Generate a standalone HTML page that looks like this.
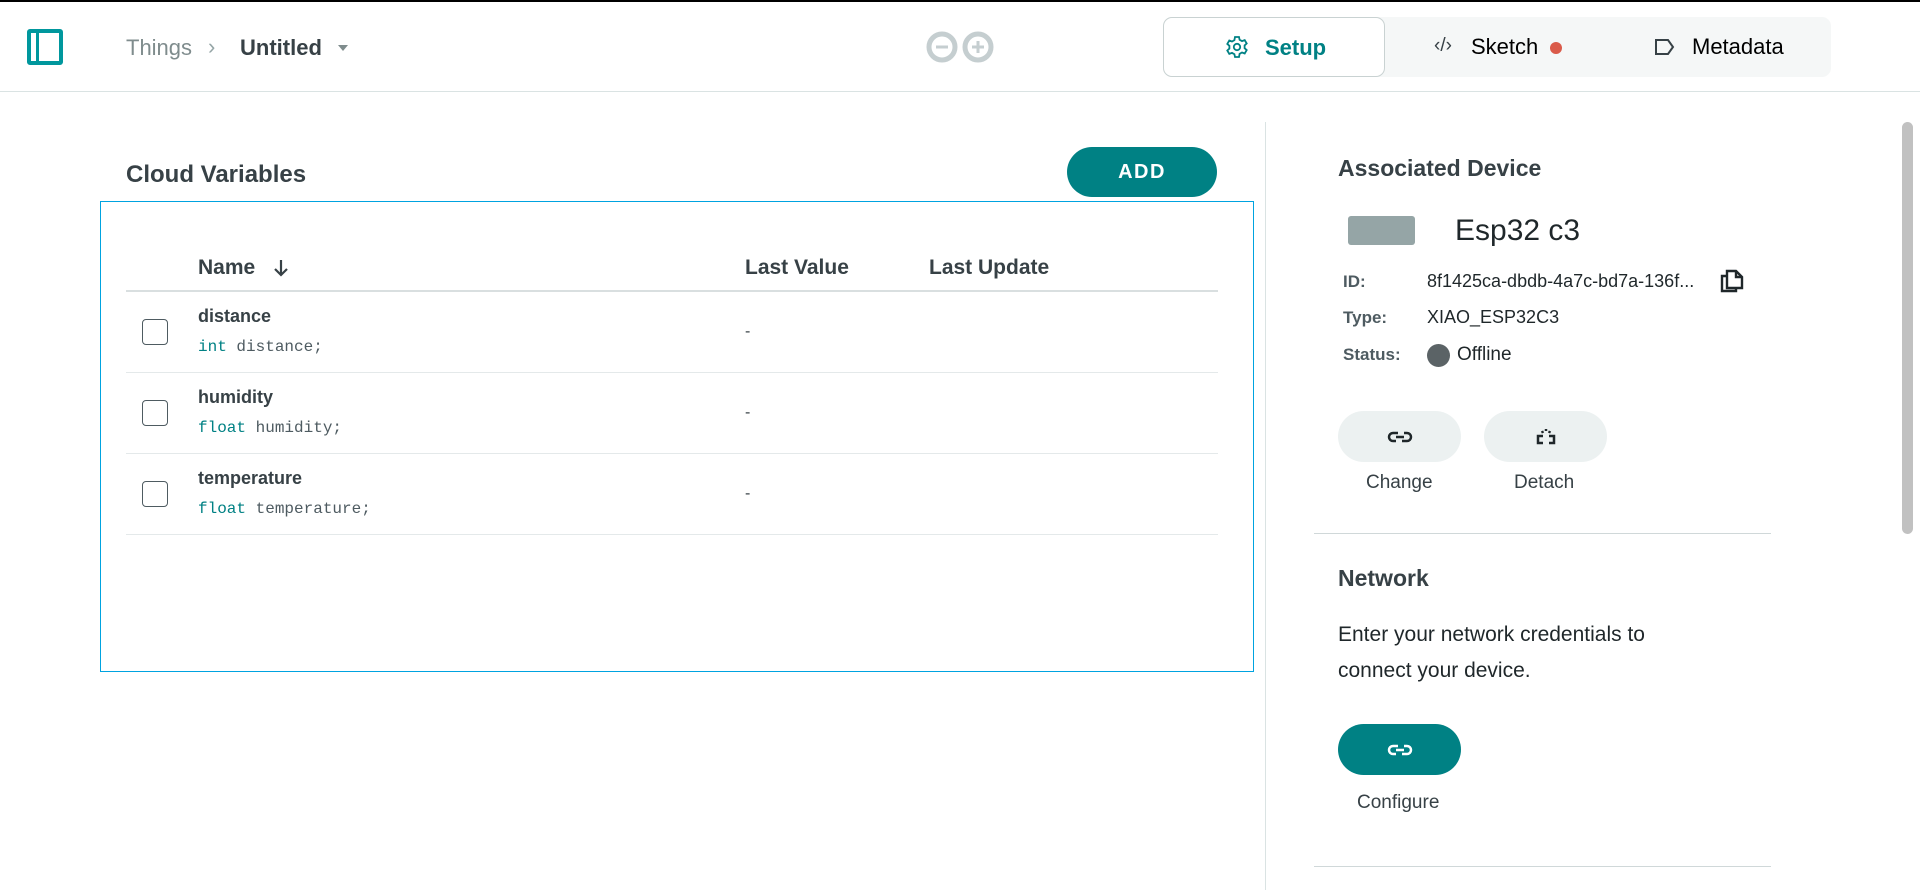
<!DOCTYPE html>
<html><head><meta charset="utf-8"><style>
*{box-sizing:border-box;margin:0;padding:0}
body{width:1920px;height:890px;overflow:hidden;background:#fff;font-family:"Liberation Sans",sans-serif;color:#374146;position:relative}
.a{position:absolute;white-space:nowrap}
.b{font-weight:bold}
.mono{font-family:"Liberation Mono",monospace;font-size:16px;color:#4e5b61}
.mono span{color:#008184}
.pill{position:absolute;border-radius:26px;background:#ecf1f1;display:flex;align-items:center;justify-content:center}
</style></head><body>
<div class="a" style="left:0;top:0;width:1920px;height:2px;background:#000"></div>
<div class="a" style="left:0;top:91px;width:1920px;height:1px;background:#dae3e3"></div>
<div class="a" style="left:27px;top:29px;width:36px;height:36px;border:4px solid #00979d;border-radius:3px"></div>
<div class="a" style="left:36px;top:31px;width:3px;height:32px;background:#00979d"></div>
<div class="a" style="left:126px;top:35px;font-size:22px;color:#7f8c8d">Things</div>
<div class="a" style="left:208px;top:34px;font-size:22px;color:#95a5a6">›</div>
<div class="a b" style="left:240px;top:35px;font-size:22px;color:#374146">Untitled</div>
<div class="a" style="left:338px;top:45px;width:0;height:0;border-left:5px solid transparent;border-right:5px solid transparent;border-top:6px solid #7f8c8d"></div>
<svg class="a" style="left:924px;top:31px" width="72" height="32" viewBox="0 0 72 32"><circle cx="18" cy="16" r="13" fill="none" stroke="#c5ced0" stroke-width="5"/><circle cx="54" cy="16" r="13" fill="none" stroke="#c5ced0" stroke-width="5"/><rect x="12" y="14.5" width="12" height="3" fill="#c5ced0"/><rect x="48" y="14.5" width="12" height="3" fill="#c5ced0"/><rect x="52.5" y="10" width="3" height="12" fill="#c5ced0"/></svg>
<div class="a" style="left:1163px;top:17px;width:668px;height:60px;background:#f5f7f7;border-radius:9px"></div>
<div class="a" style="left:1163px;top:17px;width:222px;height:60px;background:#fff;border:1px solid #c9d2d2;border-radius:9px"></div>
<svg class="a" style="left:1225px;top:35px" width="24" height="24" viewBox="0 0 24 24" fill="none" stroke="#008184" stroke-width="1.8"><circle cx="12" cy="12" r="3.2"/><path d="M10 2h4l.6 2.8 2.4 1.3 2.7-1 2 3.4-2.1 1.9v2.8l2.1 1.9-2 3.4-2.7-1-2.4 1.3L14 22h-4l-.6-2.8-2.4-1.3-2.7 1-2-3.4 2.1-1.9V10.8L2.3 8.9l2-3.4 2.7 1 2.4-1.3z"/></svg>
<div class="a b" style="left:1265px;top:35px;font-size:22px;color:#008184">Setup</div>
<div class="a" style="left:1434px;top:35px;font-size:19px;color:#374146">‹/›</div>
<div class="a" style="left:1471px;top:34px;font-size:22px;color:#000">Sketch</div>
<div class="a" style="left:1550px;top:42px;width:12px;height:12px;border-radius:50%;background:#da5b4a"></div>
<svg class="a" style="left:1654px;top:38px" width="22" height="18" viewBox="0 0 22 18" fill="none" stroke="#374146" stroke-width="2"><path d="M2 2h12l5 7-5 7H2z"/></svg>
<div class="a" style="left:1692px;top:34px;font-size:22px;color:#000">Metadata</div>
<div class="a b" style="left:126px;top:161px;font-size:24px;color:#374146">Cloud Variables</div>
<div class="pill" style="left:1067px;top:147px;width:150px;height:50px;background:#008184;color:#fff;font-weight:bold;font-size:20px;letter-spacing:1.5px">ADD</div>
<div class="a" style="left:100px;top:201px;width:1154px;height:471px;border:1px solid #00a3e0"></div>
<div class="a b" style="left:198px;top:256px;font-size:21px">Name</div>
<svg class="a" style="left:273px;top:259px" width="16" height="18" viewBox="0 0 16 18" fill="none" stroke="#374146" stroke-width="2.2"><path d="M8 1v15M2 10l6 6 6-6"/></svg>
<div class="a b" style="left:745px;top:256px;font-size:21px">Last Value</div>
<div class="a b" style="left:929px;top:256px;font-size:21px">Last Update</div>
<div class="a" style="left:126px;top:290px;width:1092px;height:2px;background:#d9dfe0"></div>

<div class="a" style="left:142px;top:319px;width:26px;height:26px;border:1.5px solid #4e5b61;border-radius:4px"></div>
<div class="a b" style="left:198px;top:306px;font-size:18px">distance</div>
<div class="a mono" style="left:198px;top:338px"><span>int</span> distance;</div>
<div class="a" style="left:745px;top:323px;font-size:16px">-</div>
<div class="a" style="left:126px;top:372px;width:1092px;height:1px;background:#e4e9ea"></div>

<div class="a" style="left:142px;top:400px;width:26px;height:26px;border:1.5px solid #4e5b61;border-radius:4px"></div>
<div class="a b" style="left:198px;top:387px;font-size:18px">humidity</div>
<div class="a mono" style="left:198px;top:419px"><span>float</span> humidity;</div>
<div class="a" style="left:745px;top:404px;font-size:16px">-</div>
<div class="a" style="left:126px;top:453px;width:1092px;height:1px;background:#e4e9ea"></div>

<div class="a" style="left:142px;top:481px;width:26px;height:26px;border:1.5px solid #4e5b61;border-radius:4px"></div>
<div class="a b" style="left:198px;top:468px;font-size:18px">temperature</div>
<div class="a mono" style="left:198px;top:500px"><span>float</span> temperature;</div>
<div class="a" style="left:745px;top:485px;font-size:16px">-</div>
<div class="a" style="left:126px;top:534px;width:1092px;height:1px;background:#e4e9ea"></div>
<div class="a" style="left:1265px;top:122px;width:1px;height:768px;background:#dae3e3"></div>
<div class="a b" style="left:1338px;top:155px;font-size:23px">Associated Device</div>
<div class="a" style="left:1348px;top:216px;width:67px;height:29px;background:#95a5a6;border-radius:3px"></div>
<div class="a" style="left:1455px;top:214px;font-size:30px;color:#1f272a">Esp32 c3</div>
<div class="a b" style="left:1343px;top:272px;font-size:17px;color:#4e5b61">ID:</div>
<div class="a" style="left:1427px;top:271px;font-size:18px;color:#1f272a">8f1425ca-dbdb-4a7c-bd7a-136f...</div>
<svg class="a" style="left:1718px;top:267px" width="28" height="28" viewBox="0 0 28 28" fill="none" stroke="#1f272a" stroke-width="2.4"><path d="M9 4h9l6 6v11H9z"/><path d="M18 4v6h6"/><path d="M9 9H4v15h14v-3"/></svg>
<div class="a b" style="left:1343px;top:308px;font-size:17px;color:#4e5b61">Type:</div>
<div class="a" style="left:1427px;top:307px;font-size:18px;color:#1f272a">XIAO_ESP32C3</div>
<div class="a b" style="left:1343px;top:345px;font-size:17px;color:#4e5b61">Status:</div>
<div class="a" style="left:1427px;top:344px;width:23px;height:23px;border-radius:50%;background:#5b6366"></div>
<div class="a" style="left:1457px;top:344px;font-size:19px;color:#1f272a">Offline</div>
<div class="pill" style="left:1338px;top:411px;width:123px;height:51px"><svg width="26" height="14" viewBox="0 0 26 14" fill="none" stroke="#1f272a" stroke-width="2.5"><path d="M11 3H6a4 4 0 000 8h3M15 11h5a4 4 0 000-8h-3M9 7h8"/></svg></div>
<div class="pill" style="left:1484px;top:411px;width:123px;height:51px"><svg width="26" height="18" viewBox="0 0 26 18" fill="none" stroke="#1f272a" stroke-width="2.5"><path d="M10 8H5v7h5M16 8h5v7h-5M9 3l1 2M13 1v2M17 3l-1 2"/></svg></div>
<div class="a" style="left:1366px;top:472px;font-size:19px">Change</div>
<div class="a" style="left:1514px;top:472px;font-size:19px">Detach</div>
<div class="a" style="left:1314px;top:533px;width:457px;height:1px;background:#d0d8d9"></div>
<div class="a b" style="left:1338px;top:565px;font-size:23px">Network</div>
<div class="a" style="left:1338px;top:623px;font-size:21px;color:#1f272a">Enter your network credentials to</div>
<div class="a" style="left:1338px;top:659px;font-size:21px;color:#1f272a">connect your device.</div>
<div class="pill" style="left:1338px;top:724px;width:123px;height:51px;background:#008184"><svg width="26" height="14" viewBox="0 0 26 14" fill="none" stroke="#fff" stroke-width="2.5"><path d="M11 3H6a4 4 0 000 8h3M15 11h5a4 4 0 000-8h-3M9 7h8"/></svg></div>
<div class="a" style="left:1357px;top:792px;font-size:19px">Configure</div>
<div class="a" style="left:1314px;top:866px;width:457px;height:1px;background:#d0d8d9"></div>
<div class="a" style="left:1902px;top:122px;width:11px;height:412px;background:#c1c1c1;border-radius:6px"></div>
</body></html>
